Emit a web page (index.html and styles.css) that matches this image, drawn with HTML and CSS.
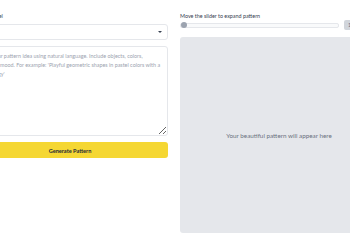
FILE: index.html
```html
<!DOCTYPE html>
<html lang="en">
  <head>
    <meta charset="utf-8">
    <meta name="viewport" content="width=device-width, initial-scale=1">
    <title>Pattern Generator</title>
    <link rel="stylesheet" href="styles.css">
  </head>
  <body>
    <div class="page">
      <div class="layout">

        <!-- Left: prompt form -->
        <form class="prompt-form">
          <label class="field-label" for="model">Select Model</label>
          <div class="select-wrap">
            <select id="model" class="model-select">
              <option>Default</option>
            </select>
          </div>
          <textarea class="prompt-input" placeholder="Enter your pattern idea using natural language. Include objects, colors, textures, mood. For example: 'Playful geometric shapes in pastel colors with a fun energy'"></textarea>
          <button class="generate-button" type="button">Generate Pattern</button>
        </form>

        <!-- Right: preview -->
        <div class="preview-col">
          <div class="field-label">Move the slider to expand pattern</div>
          <div class="slider-row">
            <input class="scale-slider" type="range" min="1" max="10" value="1">
            <button class="scale-button" type="button">1x</button>
          </div>
          <div class="preview-box">
            <p class="preview-empty">Your beautiful pattern will appear here</p>
          </div>
        </div>

      </div>
    </div>
  </body>
</html>
```

FILE: styles.css
```css
/* Page */
body {
    margin: 0;
    background-color: #ffffff;
    font-family: 'Lato', 'Open Sans', sans-serif;
    color: #374151;
}

.page {
    display: flex;
    justify-content: center;
    padding-top: 12px;
}

.layout {
    flex: none;
    display: grid;
    grid-template-columns: 196px 198px;
    column-gap: 12px;
}

.field-label {
    display: block;
    font-size: 5.4px;
    line-height: 8px;
    height: 8px;
    color: #374151;
}

/* Left column */
.prompt-form {
    display: flex;
    flex-direction: column;
}

.select-wrap {
    position: relative;
    margin-top: 4px;
}

.select-wrap::after {
    content: '';
    position: absolute;
    right: 6px;
    top: 7px;
    border-left: 2px solid transparent;
    border-right: 2px solid transparent;
    border-top: 2px solid #374151;
}

.model-select {
    display: block;
    appearance: none;
    width: 100%;
    height: 16px;
    margin: 0;
    padding: 0 5px;
    border: 1px solid #e5e7eb;
    border-radius: 3px;
    background-color: #ffffff;
    font-family: inherit;
    font-size: 5.4px;
    color: #374151;
}

.prompt-input {
    display: block;
    margin: 6px 0 0 0;
    height: 90px;
    padding: 5px 3px 5px 5px;
    box-sizing: border-box;
    border: 1px solid #e5e7eb;
    border-radius: 3px;
    font-family: inherit;
    font-size: 5.4px;
    line-height: 9px;
    color: #374151;
    resize: vertical;
}

.prompt-input::placeholder {
    color: #9ca3af;
}

.generate-button {
    margin-top: 6px;
    height: 16px;
    border: none;
    border-radius: 3px;
    background-color: #f5d733;
    color: #1f2937;
    font-family: inherit;
    font-size: 5.6px;
    font-weight: bold;
    cursor: pointer;
}

/* Right column */
.preview-col {
    display: flex;
    flex-direction: column;
}

.slider-row {
    display: flex;
    align-items: center;
    gap: 5px;
    height: 10px;
}

.scale-slider {
    appearance: none;
    flex: 1;
    height: 3px;
    margin: 0;
    border: 1px solid #e5e7eb;
    border-radius: 2px;
    background-color: #f9fafb;
}

.scale-slider::-webkit-slider-thumb {
    appearance: none;
    width: 6px;
    height: 6px;
    border-radius: 50%;
    background-color: #9ca3af;
}

.scale-button {
    width: 34px;
    height: 10px;
    padding: 0 0 0 4px;
    border: none;
    border-radius: 2px;
    background-color: #d1d5db;
    color: #6b7280;
    font-family: inherit;
    font-size: 5.4px;
    text-align: left;
}

.preview-box {
    margin-top: 7px;
    height: 196px;
    border-radius: 3px;
    background-color: #e5e7eb;
    display: flex;
    align-items: center;
    justify-content: center;
}

.preview-empty {
    margin: 0;
    font-size: 6.3px;
    color: #6b7280;
}
```
